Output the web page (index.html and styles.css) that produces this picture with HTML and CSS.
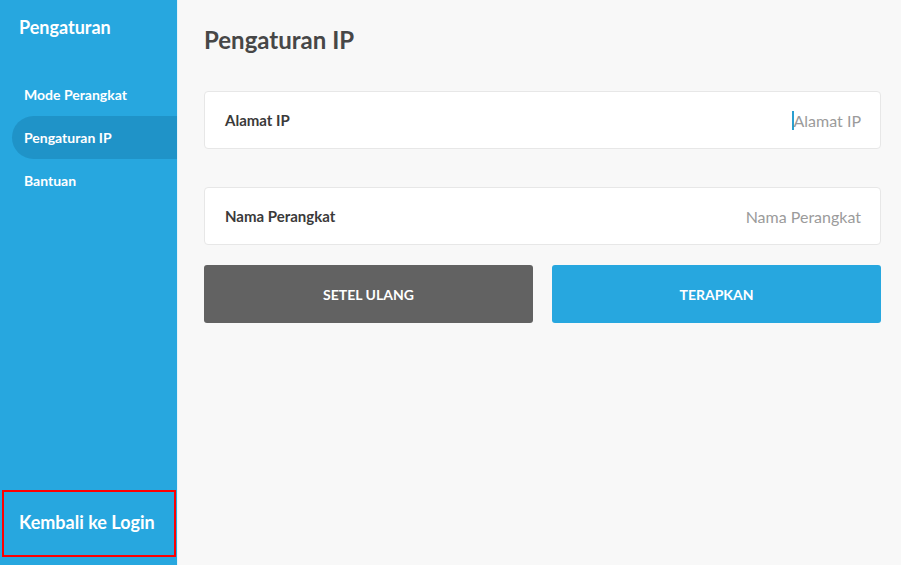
FILE: index.html
```html
<!DOCTYPE html>
<html lang="id">
<head>
    <meta charset="UTF-8">
    <meta name="viewport" content="width=device-width, initial-scale=1.0">
    <title>Pengaturan IP</title>
    <link rel="stylesheet" href="styles.css">
</head>
<body>
    <div class="app">
        <aside class="sidebar">
            <div class="side-title">Pengaturan</div>
            <nav class="menu">
                <a class="menu-item" href="#">Mode Perangkat</a>
                <a class="menu-item active" href="#">Pengaturan IP</a>
                <a class="menu-item" href="#">Bantuan</a>
            </nav>
            <a class="back" href="#">Kembali ke Login</a>
        </aside>
        <main class="content">
            <h1>Pengaturan IP</h1>
            <div class="field">
                <label>Alamat IP</label>
                <div class="value"><span class="caret"></span><span class="placeholder">Alamat IP</span></div>
            </div>
            <div class="field second">
                <label>Nama Perangkat</label>
                <div class="value"><span class="placeholder">Nama Perangkat</span></div>
            </div>
            <div class="actions">
                <button class="reset">SETEL ULANG</button>
                <button class="apply">TERAPKAN</button>
            </div>
        </main>
    </div>
</body>
</html>
```

FILE: styles.css
```css
body {
    margin: 0;
    font-family: Lato, "Noto Sans", sans-serif;
    background-color: #f8f8f8;
}

.app {
    display: flex;
    height: 565px;
}

.sidebar {
    width: 177px;
    border-right: 1px solid #e4f3fa;
    background-color: #27a7df;
    display: flex;
    flex-direction: column;
}

.side-title {
    color: #fff;
    font-size: 18px;
    font-weight: bold;
    line-height: 22px;
    padding: 16px 19px 0;
}

.menu {
    margin-top: 35px;
    display: flex;
    flex-direction: column;
    padding-left: 12px;
}

.menu-item {
    color: #fff;
    text-decoration: none;
    font-size: 14px;
    font-weight: bold;
    height: 43px;
    line-height: 43px;
    padding-left: 12px;
    border-radius: 22px 0 0 22px;
}

.menu-item.active {
    background-color: #1f93c8;
}

.back {
    margin: auto 1px 8px 2px;
    height: 63px;
    line-height: 61px;
    border: 2px solid #f00;
    padding-left: 15px;
    color: #fff;
    text-decoration: none;
    font-size: 18px;
    font-weight: bold;
}

.content {
    flex: 1;
    padding: 26px 20px 0 26px;
}

h1 {
    margin: 0 0 37px;
    font-size: 24px;
    line-height: 28px;
    font-weight: bold;
    color: #474747;
}

.field {
    background-color: #fff;
    border: 1px solid #e7e7e7;
    border-radius: 4px;
    height: 56px;
    display: flex;
    align-items: center;
    justify-content: space-between;
    padding: 0 19px 0 20px;
}

.field.second {
    margin-top: 38px;
}

.field label {
    font-size: 15px;
    font-weight: bold;
    color: #3a3a3a;
}

.value {
    display: flex;
    align-items: center;
    font-size: 16px;
}

.caret {
    width: 2px;
    height: 19px;
    background-color: #2a9fd0;
}

.placeholder {
    color: #9b9b9b;
}

.actions {
    display: grid;
    grid-template-columns: 1fr 1fr;
    gap: 19px;
    margin-top: 20px;
}

button {
    height: 58px;
    border: none;
    border-radius: 3px;
    color: #fff;
    font-family: inherit;
    font-size: 14px;
    font-weight: bold;
    cursor: pointer;
}

button.reset {
    background-color: #626262;
}

button.apply {
    background-color: #27a7df;
}
```
